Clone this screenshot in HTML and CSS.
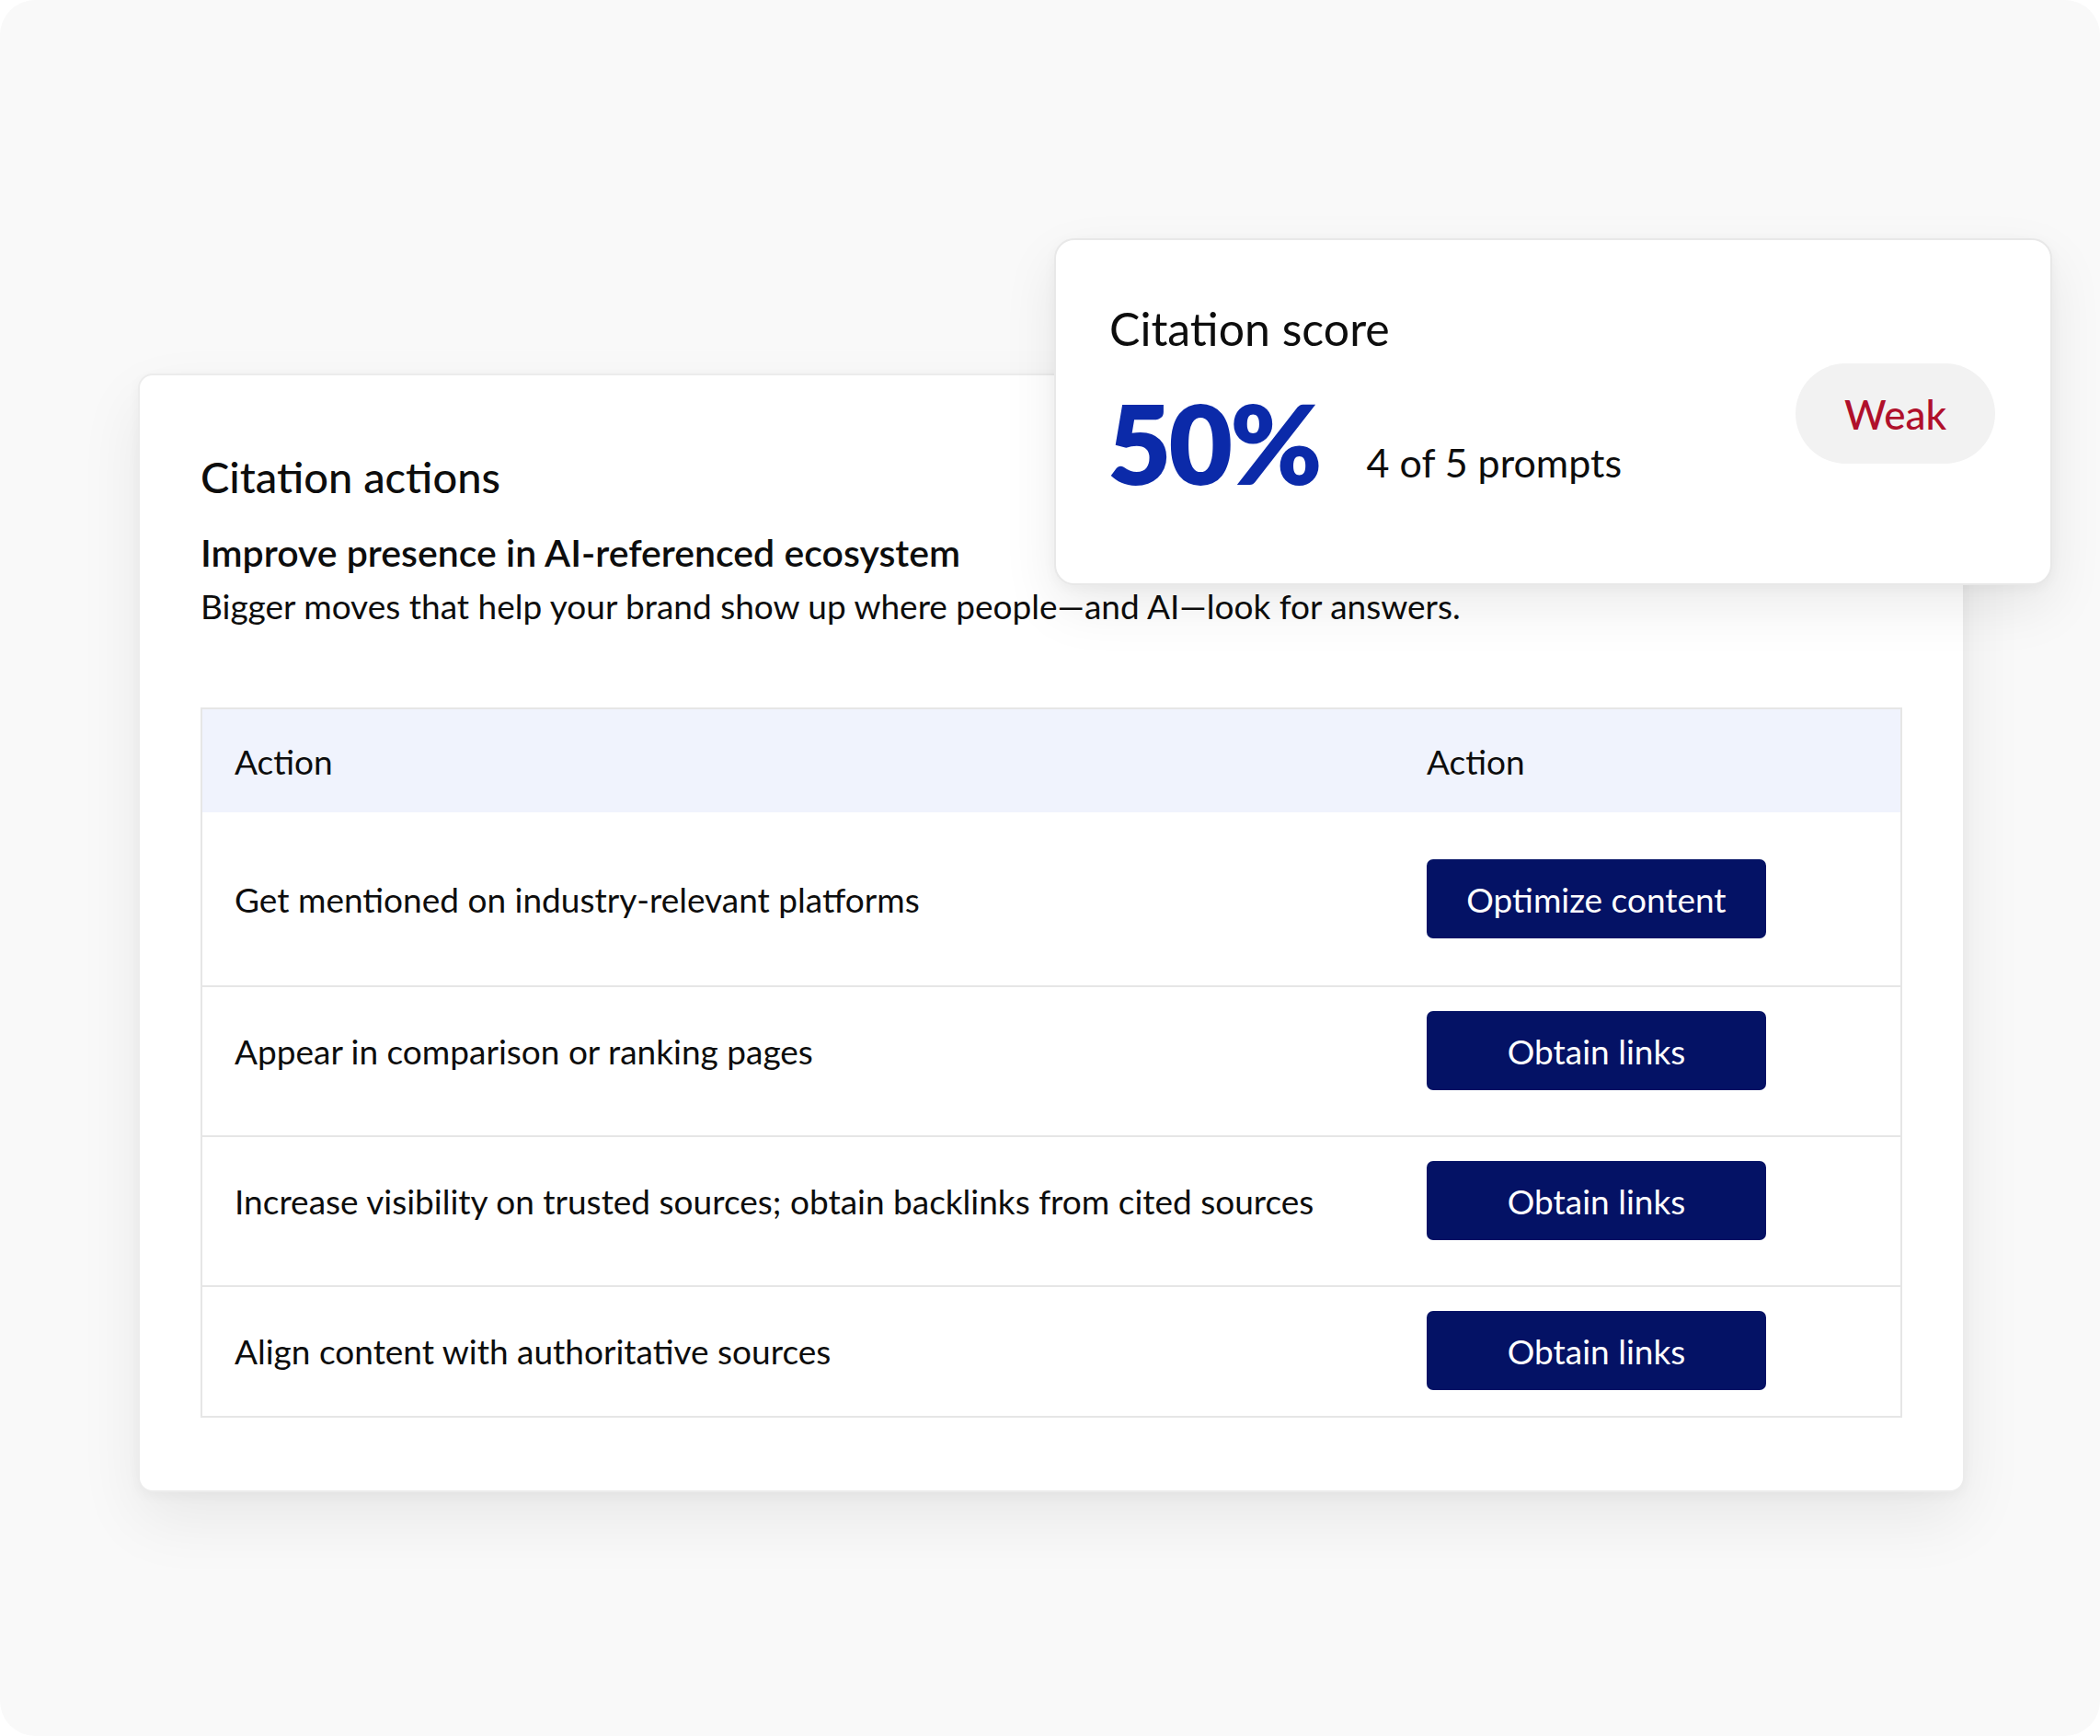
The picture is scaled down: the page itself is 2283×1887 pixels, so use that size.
FILE: index.html
```html
<!DOCTYPE html>
<html lang="en">

<head>
  <meta charset="UTF-8" />
  <meta name="viewport" content="width=device-width, initial-scale=1.0" />
  <title>Citation actions</title>
  <link rel="stylesheet" href="styles.css">
</head>

<body>
  <div class="canvas">

    <!-- main card with the actions table -->
    <section class="card">
      <h2 class="card-title">Citation actions</h2>
      <h3 class="card-subtitle">Improve presence in AI-referenced ecosystem</h3>
      <p class="card-text">Bigger moves that help your brand show up where people—and AI—look for answers.</p>

      <div class="table">
        <div class="row head">
          <div class="cell first">Action</div>
          <div class="cell second">Action</div>
        </div>
        <div class="row r1">
          <div class="cell first">Get mentioned on industry-relevant platforms</div>
          <div class="cell second"><button class="btn">Optimize content</button></div>
        </div>
        <div class="row r2">
          <div class="cell first">Appear in comparison or ranking pages</div>
          <div class="cell second"><button class="btn">Obtain links</button></div>
        </div>
        <div class="row r3">
          <div class="cell first">Increase visibility on trusted sources; obtain backlinks from cited sources</div>
          <div class="cell second"><button class="btn">Obtain links</button></div>
        </div>
        <div class="row r4">
          <div class="cell first">Align content with authoritative sources</div>
          <div class="cell second"><button class="btn">Obtain links</button></div>
        </div>
      </div>
    </section>

    <!-- floating score card -->
    <aside class="score">
      <div class="score-main">
        <div class="score-label">Citation score</div>
        <div class="score-row">
          <span class="score-value">50%</span>
          <span class="score-count">4 of 5 prompts</span>
        </div>
      </div>
      <span class="pill">Weak</span>
    </aside>

  </div>
</body>

</html>
```

FILE: styles.css
```css
* {
  box-sizing: border-box;
}

body {
  margin: 0;
  background: #ffffff;
  font-family: Lato, "Noto Sans", sans-serif;
  color: #0d0d0d;
}

/* grey rounded backdrop */
.canvas {
  position: relative;
  width: 2283px;
  height: 1887px;
  background: #f9f9f9;
  border-radius: 38px;
  padding: 406px 0 0 150px;
  overflow: hidden;
}

/* main card */
.card {
  width: 1986px;
  height: 1216px;
  background: #fff;
  border: 2px solid #ececec;
  border-radius: 16px;
  padding: 54px 66px 0 66px;
  box-shadow: 0 30px 70px rgba(0, 0, 0, 0.07), 0 4px 14px rgba(0, 0, 0, 0.04);
}

.card-title {
  margin: 0;
  padding-top: 28px;
  font-size: 47px;
  font-weight: 500;
  line-height: 56px;
}

.card-subtitle {
  margin: 28px 0 0;
  font-size: 41px;
  font-weight: 600;
  line-height: 54px;
}

.card-text {
  margin: 4px 0 0;
  font-size: 37px;
  line-height: 54px;
}

/* table */
.table {
  margin-top: 83px;
  border: 2px solid #e6e6e6;
}

.row {
  display: flex;
  align-items: center;
  border-top: 2px solid #e6e6e6;
  font-size: 37px;
}

.row.head {
  border-top: none;
  height: 112px;
  background: #f0f3fd;
}

.cell.first {
  width: 1298px;
  padding-left: 35px;
}

.cell.second {
  padding-left: 33px;
}

.r1 {
  padding: 51px 0;
  border-top: none;
}

.r2,
.r3 {
  padding: 26px 0 49px;
}

.r4 {
  padding: 26px 0 28px;
}

.btn {
  width: 369px;
  height: 86px;
  border: none;
  border-radius: 7px;
  background: #041265;
  color: #fff;
  font-family: inherit;
  font-size: 37px;
}

/* score card on top */
.score {
  position: absolute;
  left: 1146px;
  top: 259px;
  width: 1085px;
  height: 377px;
  display: flex;
  justify-content: space-between;
  align-items: flex-start;
  padding: 66px 60px 0 56px;
  background: #fff;
  border: 2px solid #e8e8e8;
  border-radius: 22px;
  box-shadow: 0 24px 60px rgba(0, 0, 0, 0.08), 0 4px 14px rgba(0, 0, 0, 0.04);
}

.score-label {
  font-size: 50px;
  line-height: 60px;
  padding-left: 2px;
}

.score-row {
  display: flex;
  align-items: flex-end;
  gap: 51px;
  margin-top: 34px;
}

.score-value {
  font-size: 120px;
  font-weight: 800;
  color: #0b2aa9;
  line-height: 1;
  letter-spacing: -3px;
}

.score-count {
  font-size: 43px;
  line-height: 1;
  padding-bottom: 17px;
}

.pill {
  margin-top: 68px;
  width: 217px;
  height: 109px;
  border-radius: 55px;
  background: #f2f2f2;
  color: #b0102b;
  font-size: 44px;
  font-weight: 500;
  display: flex;
  align-items: center;
  justify-content: center;
}
```
